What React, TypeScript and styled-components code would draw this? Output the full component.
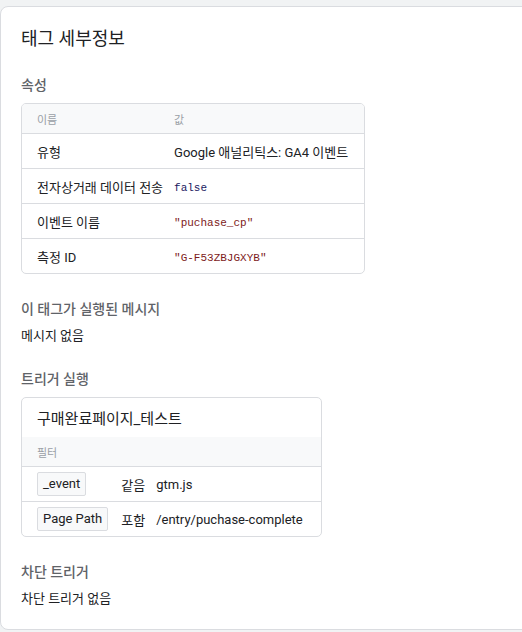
import React from "react";
import styled, { createGlobalStyle } from "styled-components";

const Global = createGlobalStyle`
  html, body { margin: 0; padding: 0; }
  body {
    background: #f1f3f4;
    font-family: Roboto, "Noto Sans CJK KR", sans-serif;
    color: #202124;
    overflow: hidden;
  }
`;

const Page = styled.div`
  padding-top: 6px;
  height: 632px;
  box-sizing: border-box;
`;

const Card = styled.section`
  background: #fff;
  border: 1px solid #dadce0;
  border-radius: 8px;
  margin-right: -12px;
  padding: 20px 20px 20px 20px;
  display: flex;
  flex-direction: column;
`;

const Title = styled.h1`
  margin: 0;
  font-size: 18px;
  line-height: 24px;
  font-weight: 400;
  color: #202124;
`;

const SectionTitle = styled.h2<{ $top: number }>`
  margin: ${(p) => p.$top}px 0 0 0;
  font-size: 14px;
  line-height: 20px;
  font-weight: 500;
  color: #5f6368;
`;

const Plain = styled.p`
  margin: 7px 0 0 0;
  font-size: 13px;
  line-height: 20px;
  color: #202124;
`;

const Box = styled.div<{ $w: number }>`
  margin-top: 8px;
  width: ${(p) => p.$w}px;
  box-sizing: border-box;
  border: 1px solid #dadce0;
  border-radius: 5px;
  overflow: hidden;
`;

const Table = styled.table`
  width: 100%;
  border-collapse: collapse;
  font-size: 13px;
`;

const HeadCell = styled.th<{ $pl?: number; $fit?: boolean }>`
  background: #f8f9fa;
  height: 29px;
  padding: 0 0 0 ${(p) => p.$pl ?? 15}px;
  text-align: left;
  font-size: 11px;
  font-weight: 400;
  color: #9aa0a6;
  ${(p) => (p.$fit ? "width: 1px;" : "")}
`;

const Cell = styled.td<{ $pl?: number; $fit?: boolean }>`
  height: 34px;
  padding: 0 0 0 ${(p) => p.$pl ?? 15}px;
  border-top: 1px solid #dadce0;
  color: #202124;
  white-space: nowrap;
  ${(p) => (p.$fit ? "width: 1px;" : "")}
`;

const Code = styled.span<{ $kind: "bool" | "str" }>`
  font-family: "Liberation Mono", "DejaVu Sans Mono", monospace;
  font-size: 11px;
  color: ${(p) => (p.$kind === "bool" ? "#1b1a5f" : "#7d1a1a")};
`;

const TriggerName = styled.div`
  height: 39px;
  display: flex;
  align-items: center;
  padding-left: 15px;
  font-size: 15px;
  color: #202124;
`;

const Chip = styled.span`
  display: inline-block;
  vertical-align: middle;
  padding: 0 5px;
  height: 22px;
  line-height: 22px;
  background: #f8f9fa;
  border: 1px solid #dadce0;
  border-radius: 2px;
  font-size: 13px;
  color: #202124;
`;

const props: [string, React.ReactNode][] = [
  ["유형", "Google 애널리틱스: GA4 이벤트"],
  ["전자상거래 데이터 전송", <Code $kind="bool">false</Code>],
  ["이벤트 이름", <Code $kind="str">"puchase_cp"</Code>],
  ["측정 ID", <Code $kind="str">"G-F53ZBJGXYB"</Code>],
];

const filters = [
  ["_event", "같음", "gtm.js"],
  ["Page Path", "포함", "/entry/puchase-complete"],
];

export default function App() {
  return (
    <Page>
      <Global />
      <Card>
        <Title>태그 세부정보</Title>
        <SectionTitle $top={24}>속성</SectionTitle>
        <Box $w={344}>
          <Table>
            <thead>
              <tr>
                <HeadCell $fit>이름</HeadCell>
                <HeadCell $pl={11}>값</HeadCell>
              </tr>
            </thead>
            <tbody>
              {props.map(([k, v], i) => (
                <tr key={i}>
                  <Cell $fit>{k}</Cell>
                  <Cell $pl={11}>{v}</Cell>
                </tr>
              ))}
            </tbody>
          </Table>
        </Box>
        <SectionTitle $top={25}>이 태그가 실행된 메시지</SectionTitle>
        <Plain>메시지 없음</Plain>
        <SectionTitle $top={23}>트리거 실행</SectionTitle>
        <Box $w={301}>
          <TriggerName>구매완료페이지_테스트</TriggerName>
          <Table>
            <thead>
              <tr>
                <HeadCell colSpan={3}>필터</HeadCell>
              </tr>
            </thead>
            <tbody>
              {filters.map(([a, b, c], i) => (
                <tr key={i}>
                  <Cell $fit>
                    <Chip>{a}</Chip>
                  </Cell>
                  <Cell $pl={13} $fit>{b}</Cell>
                  <Cell $pl={11}>{c}</Cell>
                </tr>
              ))}
            </tbody>
          </Table>
        </Box>
        <SectionTitle $top={25}>차단 트리거</SectionTitle>
        <Plain>차단 트리거 없음</Plain>
      </Card>
    </Page>
  );
}
